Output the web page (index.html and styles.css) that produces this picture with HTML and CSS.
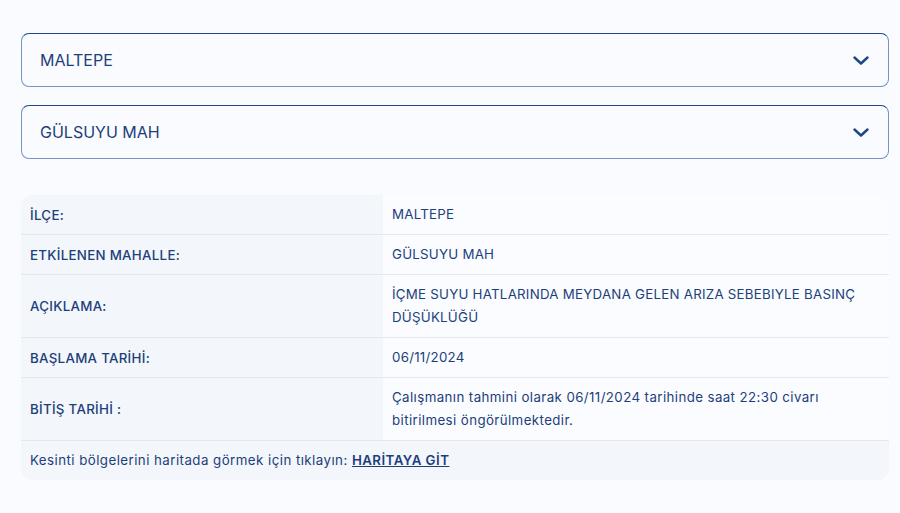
FILE: index.html
```html
<!DOCTYPE html>
<html>
<head>
    <title>Kesinti Bilgisi</title>
    <link rel="stylesheet" href="styles.css">
</head>
<body>
    <div class="container">
        <div class="select-box">
            <span>MALTEPE</span>
            <svg class="chevron" viewBox="0 0 16 9" width="16" height="9"><path d="M1.5 1.5 L8 7.5 L14.5 1.5" fill="none" stroke="#1d4684" stroke-width="2.4" stroke-linecap="round" stroke-linejoin="round"/></svg>
        </div>
        <div class="select-box">
            <span>GÜLSUYU MAH</span>
            <svg class="chevron" viewBox="0 0 16 9" width="16" height="9"><path d="M1.5 1.5 L8 7.5 L14.5 1.5" fill="none" stroke="#1d4684" stroke-width="2.4" stroke-linecap="round" stroke-linejoin="round"/></svg>
        </div>

        <div class="info-table">
            <div class="row">
                <div class="label">İLÇE:</div>
                <div class="value">MALTEPE</div>
            </div>
            <div class="row">
                <div class="label">ETKİLENEN MAHALLE:</div>
                <div class="value">GÜLSUYU MAH</div>
            </div>
            <div class="row">
                <div class="label">AÇIKLAMA:</div>
                <div class="value">İÇME SUYU HATLARINDA MEYDANA GELEN ARIZA SEBEBIYLE BASINÇ DÜŞÜKLÜĞÜ</div>
            </div>
            <div class="row">
                <div class="label">BAŞLAMA TARİHİ:</div>
                <div class="value">06/11/2024</div>
            </div>
            <div class="row">
                <div class="label">BİTİŞ TARİHİ :</div>
                <div class="value sentence">Çalışmanın tahmini olarak 06/11/2024 tarihinde saat 22:30 civarı bitirilmesi öngörülmektedir.</div>
            </div>
            <div class="footer">
                Kesinti bölgelerini haritada görmek için tıklayın: <a href="#">HARİTAYA GİT</a>
            </div>
        </div>
    </div>
</body>
</html>
```
FILE: styles.css
```css
body {
    font-family: Inter, "Noto Sans", sans-serif;
    margin: 0;
    padding: 33px 11px 0 21px;
    background-color: #f9fbfe;
    color: #1d3f7a;
}
.container {
    display: flex;
    flex-direction: column;
}
.select-box {
    display: flex;
    align-items: center;
    justify-content: space-between;
    height: 52px;
    padding: 0 19px 0 18px;
    margin-bottom: 18px;
    border: 1px solid #7593c4;
    border-top-color: #1f4785;
    border-radius: 8px;
    font-size: 16px;
    color: #1d3f7a;
}
.info-table {
    margin-top: 18px;
    border-radius: 12px;
    overflow: hidden;
    background-color: #f3f6fb;
    font-size: 13.3px;
}
.row {
    display: grid;
    grid-template-columns: 362px 1fr;
    border-bottom: 1px solid #e4e8ee;
}
.label {
    display: flex;
    align-items: center;
    padding: 0 9px;
    font-weight: 500;
    letter-spacing: 0.3px;
}
.value {
    background-color: #fafcff;
    padding: 8px 20px 8px 9px;
    line-height: 23px;
    letter-spacing: 0.25px;
}
.sentence {
    letter-spacing: 0.4px;
    padding-right: 60px;
}
.footer {
    padding: 10px 9px;
    line-height: 19px;
    letter-spacing: 0.45px;
}
.footer a {
    color: #1d3f7a;
    font-weight: 600;
    text-decoration: underline;
}
```
